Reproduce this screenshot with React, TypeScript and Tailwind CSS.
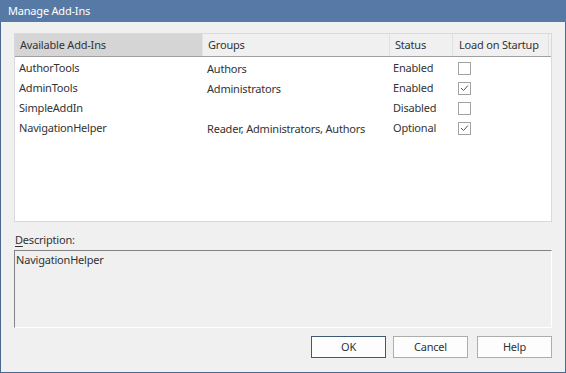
import { FC } from "react";

type Row = { name: string; groups: string; status: string; load: boolean };

const rows: Row[] = [
  { name: "AuthorTools", groups: "Authors", status: "Enabled", load: false },
  { name: "AdminTools", groups: "Administrators", status: "Enabled", load: true },
  { name: "SimpleAddIn", groups: "", status: "Disabled", load: false },
  { name: "NavigationHelper", groups: "Reader, Administrators, Authors", status: "Optional", load: true },
];

const Check: FC<{ on: boolean }> = ({ on }) => (
  <div className="w-[13px] h-[13px] border border-[#a2a2a2] bg-white flex items-center justify-center">
    {on && (
      <svg width="9" height="9" viewBox="0 0 9 9">
        <path d="M1 4 L3.5 6.5 L8 1.5" fill="none" stroke="#555" strokeWidth="1" />
      </svg>
    )}
  </div>
);

const Btn: FC<{ label: string; primary?: boolean; extra?: string }> = ({ label, primary, extra }) => (
  <button
    className={
      (primary
        ? "w-[75px] h-[22px] border border-[#3f5878] bg-[#fdfdfd] text-[#333] "
        : "w-[75px] h-[22px] border border-[#adadad] bg-[#fdfdfd] text-[#333] ") + (extra ?? "")
    }
  >
    {label}
  </button>
);

const App: FC = () => {
  return (
    <div
      className="w-[566px] h-[373px] bg-[#f0f0f0] flex flex-col text-[#333] text-[11px] tracking-[-0.2px]"
      style={{ fontFamily: '"Noto Sans", sans-serif' }}
    >
      <div className="h-[22px] bg-[#5779a5] text-white pl-[8px] flex items-center shrink-0">
        Manage Add-Ins
      </div>
      <div className="flex-1 flex flex-col border-x border-b border-[#4a6890] px-[13px] pt-[11px]">
        <div className="h-[189px] border border-[#d9d9d9] bg-white flex flex-col">
          <div className="h-[23px] flex border-b border-[#a0a0a0] bg-[#f0f0f0] shrink-0">
            <div className="w-[187px] bg-[#d5d5d5] pl-[5px] flex items-center">Available Add-Ins</div>
            <div className="w-[187px] border-l border-[#e5e5e5] pl-[5px] flex items-center">Groups</div>
            <div className="w-[63px] border-l border-[#e0e0e0] pl-[5px] flex items-center">Status</div>
            <div className="w-[97px] border-l border-[#e0e0e0] border-r pl-[6px] flex items-center whitespace-nowrap">Load on Startup</div>
          </div>
          <div className="flex flex-col pt-[1px]">
            {rows.map((r) => (
              <div key={r.name} className="h-[20px] flex items-center">
                <div className="w-[187px] pl-[4px]">{r.name}</div>
                <div className="w-[187px] pl-[5px] pt-[3px]">{r.groups}</div>
                <div className="w-[63px] pl-[4px]">{r.status}</div>
                <div className="w-[97px] pl-[6px]">
                  <Check on={r.load} />
                </div>
              </div>
            ))}
          </div>
        </div>
        <div className="mt-[10px] pl-[1px] h-[18px]">
          <span className="underline underline-offset-2">D</span>escription:
        </div>
        <div className="h-[78px] border-t border-l border-[#838383] border-r border-b border-r-white border-b-white pl-[1px] pt-[1px] leading-[16px]">
          NavigationHelper
        </div>
        <div className="flex justify-end gap-[7px] mt-[8px]">
          <Btn label="OK" primary />
          <Btn label="Cancel" />
          <Btn label="Help" extra="ml-[2px]" />
        </div>
      </div>
    </div>
  );
};

export default App;
